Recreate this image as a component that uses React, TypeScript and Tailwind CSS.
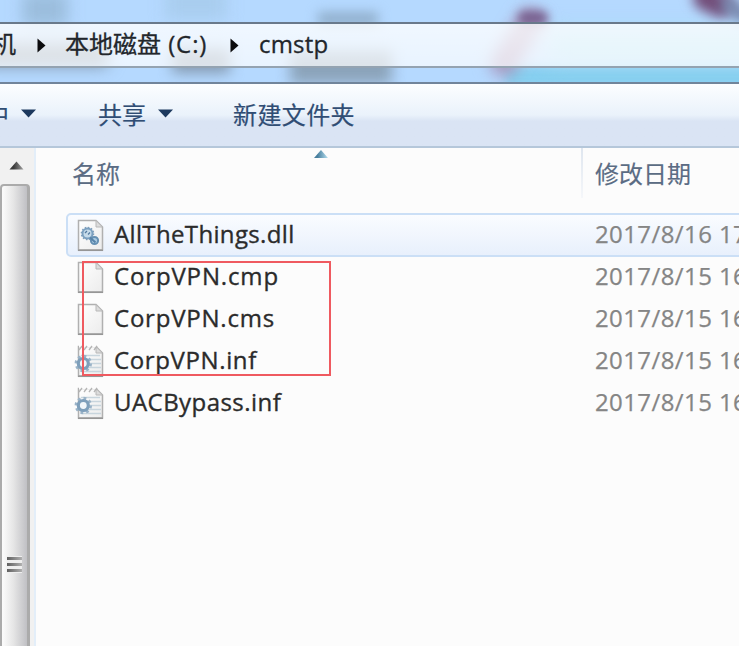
import React from "react";

function Blob({ className }: { className: string }) {
  return <div className={"absolute " + className} />;
}

function Arrow({ className }: { className: string }) {
  return (
    <svg className={className} width="9" height="15" viewBox="0 0 9 15">
      <path d="M0.5 0.5 L8.5 7.5 L0.5 14.5Z" fill="#0b0b0d" />
    </svg>
  );
}

function Caret({ className }: { className: string }) {
  return (
    <svg className={className} width="15" height="9" viewBox="0 0 15 9">
      <path d="M0 0.5 H15 L7.5 8.5Z" fill="#1d395e" />
    </svg>
  );
}

type Kind = "dll" | "blank" | "inf";

function FileIcon({ kind }: { kind: Kind }) {
  return (
    <svg width="32" height="34" viewBox="0 0 32 34" className="shrink-0">
      <defs>
        <linearGradient id="paper" x1="0" y1="0" x2="1" y2="1">
          <stop offset="0" stopColor="#ffffff" />
          <stop offset="1" stopColor="#ececec" />
        </linearGradient>
      </defs>
      <path d="M6.5 2.5 H24 L30.5 9 V32 H6.5Z" fill="url(#paper)" stroke="#b0b0b0" strokeWidth="1.5" />
      <path d="M6 32.3 H31" stroke="#969696" strokeWidth="1.5" />
      <path d="M24 2.5 V9 H30.5Z" fill="#dcdcdc" stroke="#b8b8b8" />
      {kind === "dll" && (
        <g>
          <circle cx="15.5" cy="15.5" r="5" fill="#c6dbea" stroke="#7ba0c0" strokeWidth="2" />
          <circle cx="15.5" cy="15.5" r="6.2" fill="none" stroke="#7f9fbb" strokeWidth="1.2" strokeDasharray="1.6 1.6" />
          <path d="M13 15 l2-2 M16 16.5 l2-2" stroke="#567b9f" strokeWidth="1.3" />
          <circle cx="22.5" cy="22.5" r="3.6" fill="#a9c9e0" stroke="#6590b3" strokeWidth="2" />
          <path d="M18 19.5 L23.5 24.5" stroke="#5783a9" strokeWidth="2" />
        </g>
      )}
      {kind === "inf" && (
        <g>
          <path d="M7 2 H24" stroke="#fcfcfc" strokeWidth="2.5" />
          <path d="M7 6 l3-4 M12 6 l3-4 M17 6 l3-4 M22 6 l3-4" stroke="#b5b5b5" strokeWidth="1.3" />
          <path d="M9 11.5 H28 M9 15.5 H29 M9 19.5 H29 M9 23.5 H29 M9 27.5 H29" stroke="#c8d5dd" strokeWidth="1.3" />
          <circle cx="11.3" cy="19.5" r="7.4" fill="none" stroke="#9ab3c8" strokeWidth="2.6" strokeDasharray="2.8 3.01" />
          <circle cx="11.3" cy="19.5" r="5" fill="#f1f6fa" stroke="#7e9fbb" strokeWidth="3.2" />
        </g>
      )}
    </svg>
  );
}

type FileRow = { name: string; date: string; kind: Kind; tracking: string };

const files: FileRow[] = [
  { name: "AllTheThings.dll", date: "2017/8/16 17:20", kind: "dll", tracking: "tracking-[0.35px]" },
  { name: "CorpVPN.cmp", date: "2017/8/15 16:38", kind: "blank", tracking: "tracking-[0.85px]" },
  { name: "CorpVPN.cms", date: "2017/8/15 16:38", kind: "blank", tracking: "tracking-[0.78px]" },
  { name: "CorpVPN.inf", date: "2017/8/15 16:38", kind: "inf", tracking: "tracking-[0.62px]" },
  { name: "UACBypass.inf", date: "2017/8/15 16:38", kind: "inf", tracking: "tracking-[0.45px]" },
];

function Row({ file, selected }: { file: FileRow; selected: boolean }) {
  return (
    <div
      className={
        "flex w-[720px] items-center border-2 pl-[4px] " +
        (selected
          ? "h-[44px] rounded-[5px] border-[#cbdff6] bg-linear-to-b from-[#fafcff] to-[#e8f0fc]"
          : "-mt-px mb-px h-[42px] border-transparent")
      }
    >
      <FileIcon kind={file.kind} />
      <span
        className={
          "ml-[10px] w-[481px] shrink-0 pb-[2px] text-[24px] leading-[36px] text-[#2b2b2b] [-webkit-text-stroke:0.35px_#2b2b2b] " +
          file.tracking
        }
      >
        {file.name}
      </span>
      <span className="shrink-0 pb-[2px] text-[24px] leading-[36px] tracking-[0.4px] text-[#858585] [-webkit-text-stroke:0.25px_#858585]">
        {file.date}
      </span>
    </div>
  );
}

export default function App() {
  return (
    <div className="flex h-[646px] w-[739px] flex-col overflow-hidden bg-[#fcfcfc] font-['Open_Sans','Noto_Sans_CJK_SC',sans-serif] whitespace-nowrap">
      <header className="relative flex h-[84px] shrink-0 flex-col overflow-hidden border-b-2 border-[#71859b] bg-[#b5d9ff]">
        <Blob className="-top-2 left-[22px] h-[34px] w-[46px] bg-[#9bbddd] blur-[8px]" />
        <Blob className="-top-4 left-[165px] h-[36px] w-[62px] bg-[#a9cdef] blur-[8px]" />
        <Blob className="top-[12px] left-[318px] h-[14px] w-[60px] bg-[#90aecb] blur-[6px]" />
        <Blob className="top-[42px] -left-4 h-[24px] w-[124px] bg-[#7f92a5] blur-[8px]" />
        <Blob className="top-[48px] left-[172px] h-[25px] w-[58px] bg-[#8499b0] blur-[7px]" />
        <Blob className="top-[50px] left-[290px] h-[34px] w-[102px] bg-[#8ba3ba] blur-[7px]" />
        <Blob className="top-[66px] left-[505px] h-[22px] w-[260px] bg-[#86cff0] blur-[5px]" />
        <Blob className="top-[28px] left-[550px] h-[34px] w-[220px] bg-[#a5dcf2] blur-[10px]" />
        <Blob className="top-[10px] left-[524px] h-[76px] w-[26px] origin-top rotate-[32deg] rounded-full bg-[#a794b9] blur-[8px]" />
        <Blob className="top-[11px] left-[518px] h-[14px] w-[30px] rounded-full bg-[#77608f] blur-[5px]" />
        <Blob className="-top-[11px] left-[692px] h-[25px] w-[42px] rotate-[25deg] rounded-full bg-[#724d79] blur-[6px]" />
        <Blob className="top-[2px] left-[718px] h-[16px] w-[36px] rotate-[35deg] rounded-full bg-[#7888ae] blur-[6px]" />
        <div className="relative mt-[22px] flex h-[46px] shrink-0 items-center border-t-2 border-b-2 border-t-[#69798b] border-b-[#94a3b1] bg-linear-to-b from-white/80 to-white/70 text-[24px] leading-[36px] text-[#22262b] [-webkit-text-stroke:0.3px_#22262b]">
          <span className="-ml-[8px] w-[24px] shrink-0 pb-[3px]">机</span>
          <Arrow className="ml-[21px] shrink-0" />
          <span className="ml-[19px] w-[145px] shrink-0 pb-[3px]">
            本地磁盘<span className="tracking-[0.9px]"> (C:)</span>
          </span>
          <Arrow className="ml-[20px] shrink-0" />
          <span className="ml-[20px] shrink-0 pb-[3px] tracking-[0.2px]">cmstp</span>
        </div>
      </header>

      <nav className="flex h-[64px] shrink-0 items-center border-b-2 border-[#b5c7da] bg-linear-to-b from-[#fcfeff] from-0% via-[#eaf2fb] via-50% to-[#dae4f4] to-60% text-[24px] leading-[36px] text-[#304d74] [-webkit-text-stroke:0.2px_#304d74]">
        <span className="-ml-[15px] w-[24px] shrink-0 pb-px">中</span>
        <Caret className="-mt-[3px] ml-[12px] shrink-0" />
        <span className="ml-[62px] w-[48px] shrink-0 pb-px">共享</span>
        <Caret className="-mt-[3px] ml-[12px] shrink-0" />
        <span className="ml-[60px] shrink-0 pb-px tracking-[0.4px]">新建文件夹</span>
      </nav>

      <main className="flex min-h-0 flex-1">
        <aside className="flex w-[36px] shrink-0 flex-col border-r-2 border-[#e3eef9] bg-[#f1f1f1]">
          <div className="flex h-[36px] shrink-0 items-center pb-[2px] pl-[9px]">
            <svg width="15" height="9" viewBox="0 0 15 9">
              <defs>
                <linearGradient id="upArrow">
                  <stop offset="0.3" stopColor="#3b3b3b" />
                  <stop offset="1" stopColor="#a0a0a0" />
                </linearGradient>
              </defs>
              <path d="M0.5 8.5 L7.5 0.5 L14.5 8.5Z" fill="url(#upArrow)" />
            </svg>
          </div>
          <div className="-mb-2 flex w-[30px] flex-1 flex-col rounded-[4px] border-2 border-r-[3px] border-[#ababab] bg-linear-to-r from-[#fafafa] from-5% via-[#e6e6e6] via-45% to-[#c0c0c4] pt-[370px] pl-[5px]">
            <div className="flex w-[15px] flex-col gap-[3px] bg-[#eeeeee] py-px">
              <div className="h-[3px] bg-linear-to-r from-[#606060] to-[#b0b0b0]" />
              <div className="h-[3px] bg-linear-to-r from-[#606060] to-[#b0b0b0]" />
              <div className="h-[3px] bg-linear-to-r from-[#606060] to-[#b0b0b0]" />
            </div>
          </div>
        </aside>

        <section className="relative flex min-w-0 flex-1 flex-col overflow-hidden pl-[30px]">
          <div className="flex h-[65px] shrink-0 text-[24px] leading-[36px] text-[#5b6c84] [-webkit-text-stroke:0.15px_#5b6c84]">
            <div className="w-[515px] shrink-0 pt-[8px] pl-[6px]">名称</div>
            <div className="h-[50px] w-[2px] shrink-0 bg-linear-to-b from-[#dfe6ef] to-[#f5f7fa]" />
            <div className="shrink-0 pt-[8px] pl-[12px]">修改日期</div>
          </div>
          <svg className="absolute top-[2px] left-[278px]" width="14" height="8" viewBox="0 0 14 8">
            <defs>
              <linearGradient id="sortArrow">
                <stop offset="0.25" stopColor="#487f9e" />
                <stop offset="1" stopColor="#b5dff0" />
              </linearGradient>
            </defs>
            <path d="M0 8 L7 0 L14 8Z" fill="url(#sortArrow)" />
          </svg>
          {files.map((file, i) => (
            <Row key={file.name} file={file} selected={i === 0} />
          ))}
          <div className="absolute top-[113px] left-[46px] h-[115px] w-[249px] border-2 border-[#ef5a60]" />
        </section>
      </main>
    </div>
  );
}
